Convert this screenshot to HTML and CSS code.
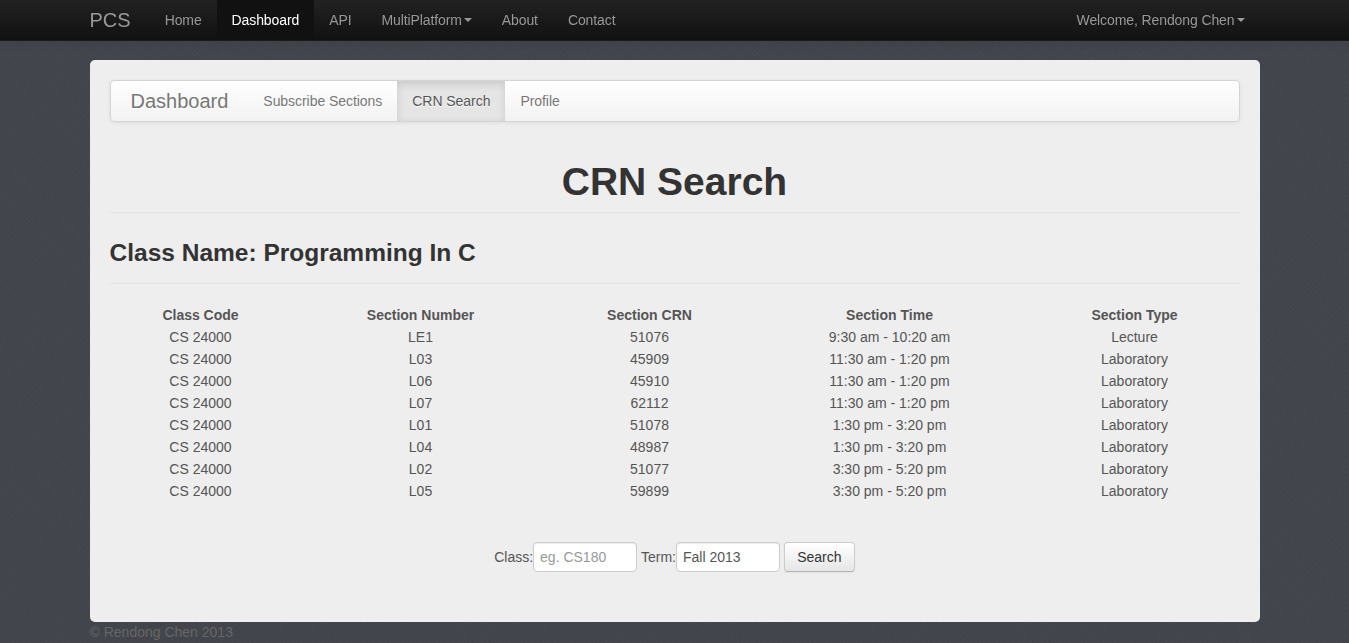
FILE: index.html
```html
<!DOCTYPE html>
<html>
<head>
<meta charset="utf-8">
<title>CRN Search</title>
<link rel="stylesheet" href="styles.css">
</head>
<body>
<div class="navbar">
  <div class="container nav-row">
    <a class="brand">PCS</a>
    <ul class="nav">
      <li><a>Home</a></li>
      <li class="active"><a>Dashboard</a></li>
      <li><a>API</a></li>
      <li><a>MultiPlatform<b class="caret"></b></a></li>
      <li><a>About</a></li>
      <li><a>Contact</a></li>
    </ul>
    <ul class="nav nav-right">
      <li><a>Welcome, Rendong Chen<b class="caret"></b></a></li>
    </ul>
  </div>
</div>

<div class="container panel">
  <div class="subnav">
    <a class="sub-brand">Dashboard</a>
    <ul class="subnav-list">
      <li><a>Subscribe Sections</a></li>
      <li class="active"><a>CRN Search</a></li>
      <li><a>Profile</a></li>
    </ul>
  </div>

  <div class="page-header">
    <h1>CRN Search</h1>
  </div>
  <div class="class-header">
    <h3>Class Name: Programming In C</h3>
  </div>

  <table class="sections">
    <colgroup>
      <col class="c1"><col class="c2"><col class="c3"><col class="c4"><col class="c5">
    </colgroup>
    <thead>
      <tr><th>Class Code</th><th>Section Number</th><th>Section CRN</th><th>Section Time</th><th>Section Type</th></tr>
    </thead>
    <tbody>
      <tr><td>CS 24000</td><td>LE1</td><td>51076</td><td>9:30 am - 10:20 am</td><td>Lecture</td></tr>
      <tr><td>CS 24000</td><td>L03</td><td>45909</td><td>11:30 am - 1:20 pm</td><td>Laboratory</td></tr>
      <tr><td>CS 24000</td><td>L06</td><td>45910</td><td>11:30 am - 1:20 pm</td><td>Laboratory</td></tr>
      <tr><td>CS 24000</td><td>L07</td><td>62112</td><td>11:30 am - 1:20 pm</td><td>Laboratory</td></tr>
      <tr><td>CS 24000</td><td>L01</td><td>51078</td><td>1:30 pm - 3:20 pm</td><td>Laboratory</td></tr>
      <tr><td>CS 24000</td><td>L04</td><td>48987</td><td>1:30 pm - 3:20 pm</td><td>Laboratory</td></tr>
      <tr><td>CS 24000</td><td>L02</td><td>51077</td><td>3:30 pm - 5:20 pm</td><td>Laboratory</td></tr>
      <tr><td>CS 24000</td><td>L05</td><td>59899</td><td>3:30 pm - 5:20 pm</td><td>Laboratory</td></tr>
    </tbody>
  </table>

  <form class="search-form">
    <label>Class:</label><input type="text" placeholder="eg. CS180"> <label>Term:</label><input type="text" value="Fall 2013"> <button type="button">Search</button>
  </form>
</div>

<div class="container footer">© Rendong Chen 2013</div>
</body>
</html>
```

FILE: styles.css
```css
html, body {
  margin: 0;
  padding: 0;
}
body {
  font-family: "Liberation Sans", Arial, sans-serif;
  font-size: 14px;
  line-height: 20px;
  color: #333;
  background-color: #42454b;
  background-image:
    repeating-linear-gradient(45deg, rgba(255,255,255,0.01) 0 1px, transparent 1px 3px),
    repeating-linear-gradient(-45deg, rgba(0,0,0,0.025) 0 1px, transparent 1px 4px);
  padding-top: 60px;
}
ul { list-style: none; margin: 0; padding: 0; }
a { text-decoration: none; cursor: pointer; }

.container {
  width: 1170px;
  margin: 0 auto;
  box-sizing: border-box;
}

/* top navbar */
.navbar {
  position: fixed;
  top: 0;
  left: 0;
  right: 0;
  height: 40px;
  background: linear-gradient(#222222, #111111);
  border-bottom: 1px solid #1a1a1a;
  box-shadow: 0 1px 10px rgba(0,0,0,0.1);
}
.nav-row {
  display: flex;
  height: 40px;
}
.brand {
  display: block;
  font-size: 20px;
  color: #999;
  padding: 10px 19px 10px 0;
  line-height: 20px;
}
.nav {
  display: flex;
}
.nav li a {
  display: block;
  padding: 10px 15px;
  line-height: 20px;
  color: #999;
  letter-spacing: -0.1px;
  text-shadow: 0 -1px 0 rgba(0,0,0,0.25);
}
.nav li.active a {
  background-color: #111;
  color: #fff;
}
.nav-right {
  margin-left: auto;
}
.caret {
  display: inline-block;
  width: 0;
  height: 0;
  vertical-align: top;
  margin-top: 8px;
  margin-left: 2px;
  border-top: 4px solid #999;
  border-left: 4px solid transparent;
  border-right: 4px solid transparent;
}

/* panel */
.panel {
  background: #eeeeee;
  border-radius: 5px;
  padding: 20px 20px 50px;
}

.subnav {
  display: flex;
  height: 40px;
  padding: 0 20px;
  background: linear-gradient(#ffffff, #f2f2f2);
  border: 1px solid #d4d4d4;
  border-radius: 4px;
  box-shadow: 0 1px 4px rgba(0,0,0,0.065);
}
.sub-brand {
  display: block;
  font-size: 20px;
  line-height: 20px;
  padding: 10px 20px;
  margin-left: -20px;
  color: #777;
  text-shadow: 0 1px 0 #fff;
}
.subnav-list {
  display: flex;
}
.subnav-list li a {
  display: block;
  padding: 10px 15px;
  line-height: 20px;
  color: #777;
  letter-spacing: -0.05px;
  text-shadow: 0 1px 0 #fff;
}
.subnav-list li.active a {
  background-color: #e5e5e5;
  color: #555;
  box-shadow: inset 0 3px 8px rgba(0,0,0,0.125);
}

.page-header {
  margin-top: 40px;
  padding-bottom: 10px;
  border-bottom: 1px solid #e2e2e2;
  text-align: center;
}
.page-header h1 {
  margin: 0;
  font-size: 39px;
  line-height: 40px;
  font-weight: bold;
  color: #333;
}
.class-header {
  margin-top: 20px;
  padding-bottom: 10px;
  border-bottom: 1px solid #e2e2e2;
}
.class-header h3 {
  margin: 0;
  font-size: 24.5px;
  line-height: 40px;
  font-weight: bold;
  color: #333;
}

.sections {
  width: 100%;
  border-collapse: collapse;
  margin-top: 20px;
  table-layout: fixed;
  color: #555;
}
.sections col.c1 { width: 182px; }
.sections col.c2 { width: 258px; }
.sections col.c3 { width: 200px; }
.sections col.c4 { width: 280px; }
.sections col.c5 { width: 210px; }
.sections th, .sections td {
  text-align: center;
  padding: 1px 0;
  line-height: 20px;
}
.sections th {
  font-weight: bold;
}

.search-form {
  margin: 40px 0 0;
  text-align: center;
  color: #555;
  height: 30px;
}
.search-form label {
  vertical-align: middle;
}
.search-form input {
  width: 104px;
  height: 30px;
  box-sizing: border-box;
  padding: 4px 6px;
  font-family: "Liberation Sans", Arial, sans-serif;
  font-size: 14px;
  color: #555;
  background: #fff;
  border: 1px solid #ccc;
  border-radius: 4px;
  box-shadow: inset 0 1px 1px rgba(0,0,0,0.075);
  vertical-align: middle;
  margin: 0;
}
.search-form input::placeholder {
  color: #999;
}
.search-form button {
  height: 30px;
  width: 71px;
  padding: 4px 12px;
  font-family: "Liberation Sans", Arial, sans-serif;
  font-size: 14px;
  color: #333;
  background: linear-gradient(#ffffff, #e6e6e6);
  border: 1px solid #ccc;
  border-bottom-color: #b3b3b3;
  border-radius: 4px;
  box-shadow: inset 0 1px 0 rgba(255,255,255,0.2), 0 1px 2px rgba(0,0,0,0.05);
  vertical-align: middle;
  margin: 0;
}

.footer {
  color: #666;
  line-height: 20px;
}
```
